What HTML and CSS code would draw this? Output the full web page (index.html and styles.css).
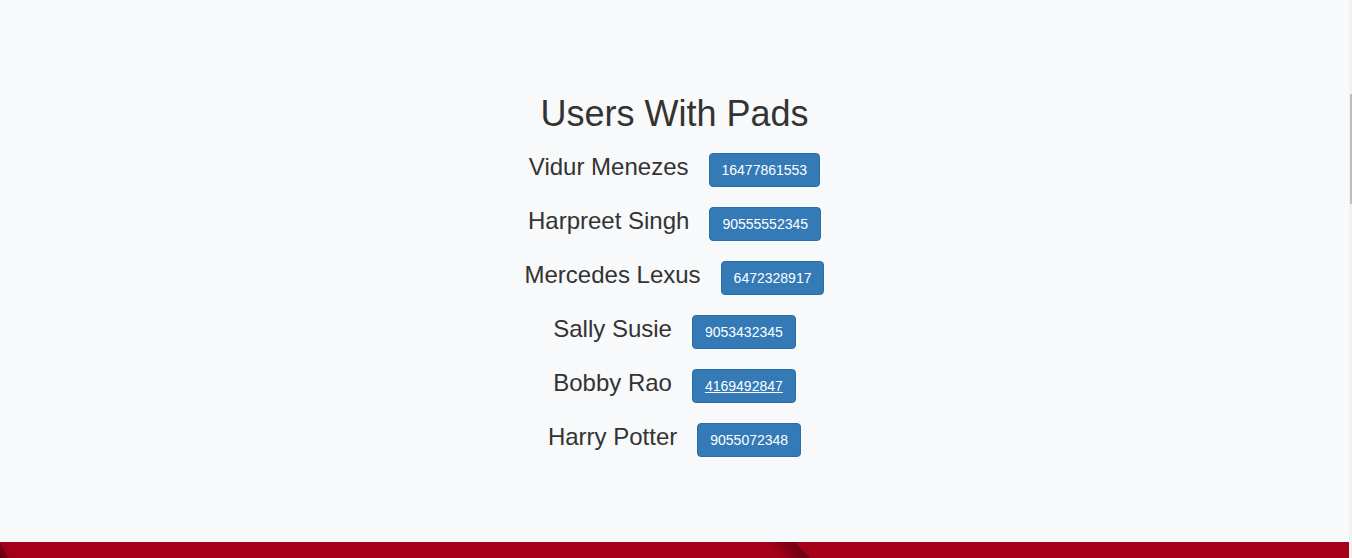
FILE: index.html
```html
<!DOCTYPE html>
<html lang="en">
<head>
<meta charset="utf-8">
<title>Users With Pads</title>
<link rel="stylesheet" href="styles.css">
</head>
<body>
<div class="frame">
  <div class="page">
    <main class="content">
      <h1 class="title">Users With Pads</h1>
      <div class="user-list">
        <div class="user-row"><span class="user-name">Vidur Menezes</span><a class="phone-btn" href="#">16477861553</a></div>
        <div class="user-row"><span class="user-name">Harpreet Singh</span><a class="phone-btn" href="#">90555552345</a></div>
        <div class="user-row"><span class="user-name">Mercedes Lexus</span><a class="phone-btn" href="#">6472328917</a></div>
        <div class="user-row"><span class="user-name">Sally Susie</span><a class="phone-btn" href="#">9053432345</a></div>
        <div class="user-row"><span class="user-name">Bobby Rao</span><a class="phone-btn phone-btn-hover" href="#">4169492847</a></div>
        <div class="user-row"><span class="user-name">Harry Potter</span><a class="phone-btn" href="#">9055072348</a></div>
      </div>
    </main>
    <footer class="footer"></footer>
  </div>
  <div class="scroll-track"><div class="scroll-thumb"></div></div>
</div>
</body>
</html>
```

FILE: styles.css
```css
html, body {
  margin: 0;
  padding: 0;
}

body {
  background: #f8f9fa;
  font-family: "Liberation Sans", Arial, Helvetica, sans-serif;
  color: #333333;
  overflow: hidden;
}

.frame {
  display: grid;
  grid-template-columns: 1fr 3px;
  height: 558px;
}

.page {
  display: flex;
  flex-direction: column;
  min-width: 0;
}

.content {
  height: 542px;
  box-sizing: border-box;
  padding-top: 94px;
  display: flex;
  flex-direction: column;
  align-items: center;
}

.title {
  margin: 0 0 19px;
  font-size: 36px;
  font-weight: 400;
  line-height: 40px;
  color: #333333;
}

.user-list {
  display: flex;
  flex-direction: column;
  gap: 20px;
  align-items: center;
}

.user-row {
  display: flex;
  align-items: baseline;
  justify-content: center;
  gap: 20px;
}

.user-name {
  font-size: 24px;
  line-height: 26px;
  color: #333333;
}

.phone-btn {
  display: inline-block;
  padding: 6px 12px;
  font-size: 14px;
  line-height: 20px;
  color: #ffffff;
  background: #337ab7;
  border: 1px solid #2e6da4;
  border-radius: 4px;
  text-decoration: none;
}

.phone-btn-hover {
  text-decoration: underline;
}

.footer {
  height: 16px;
  background-color: #a4001a;
  background-image:
    linear-gradient(47deg, rgba(164,0,26,0) 35%, rgba(60,0,10,0.55) 73%, rgba(164,0,26,0) 73.5%),
    linear-gradient(60deg, rgba(50,0,8,0.6) 0%, rgba(50,0,8,0.35) 45%, rgba(164,0,26,0) 46%);
  background-size: 60px 16px, 10px 16px;
  background-position: 755px 0, 0 0;
  background-repeat: no-repeat;
}

.scroll-track {
  background: #f1f1f1;
  display: flex;
  justify-content: flex-end;
  padding-top: 94px;
}

.scroll-thumb {
  width: 2px;
  height: 110px;
  background: #bdbdbd;
}
```
